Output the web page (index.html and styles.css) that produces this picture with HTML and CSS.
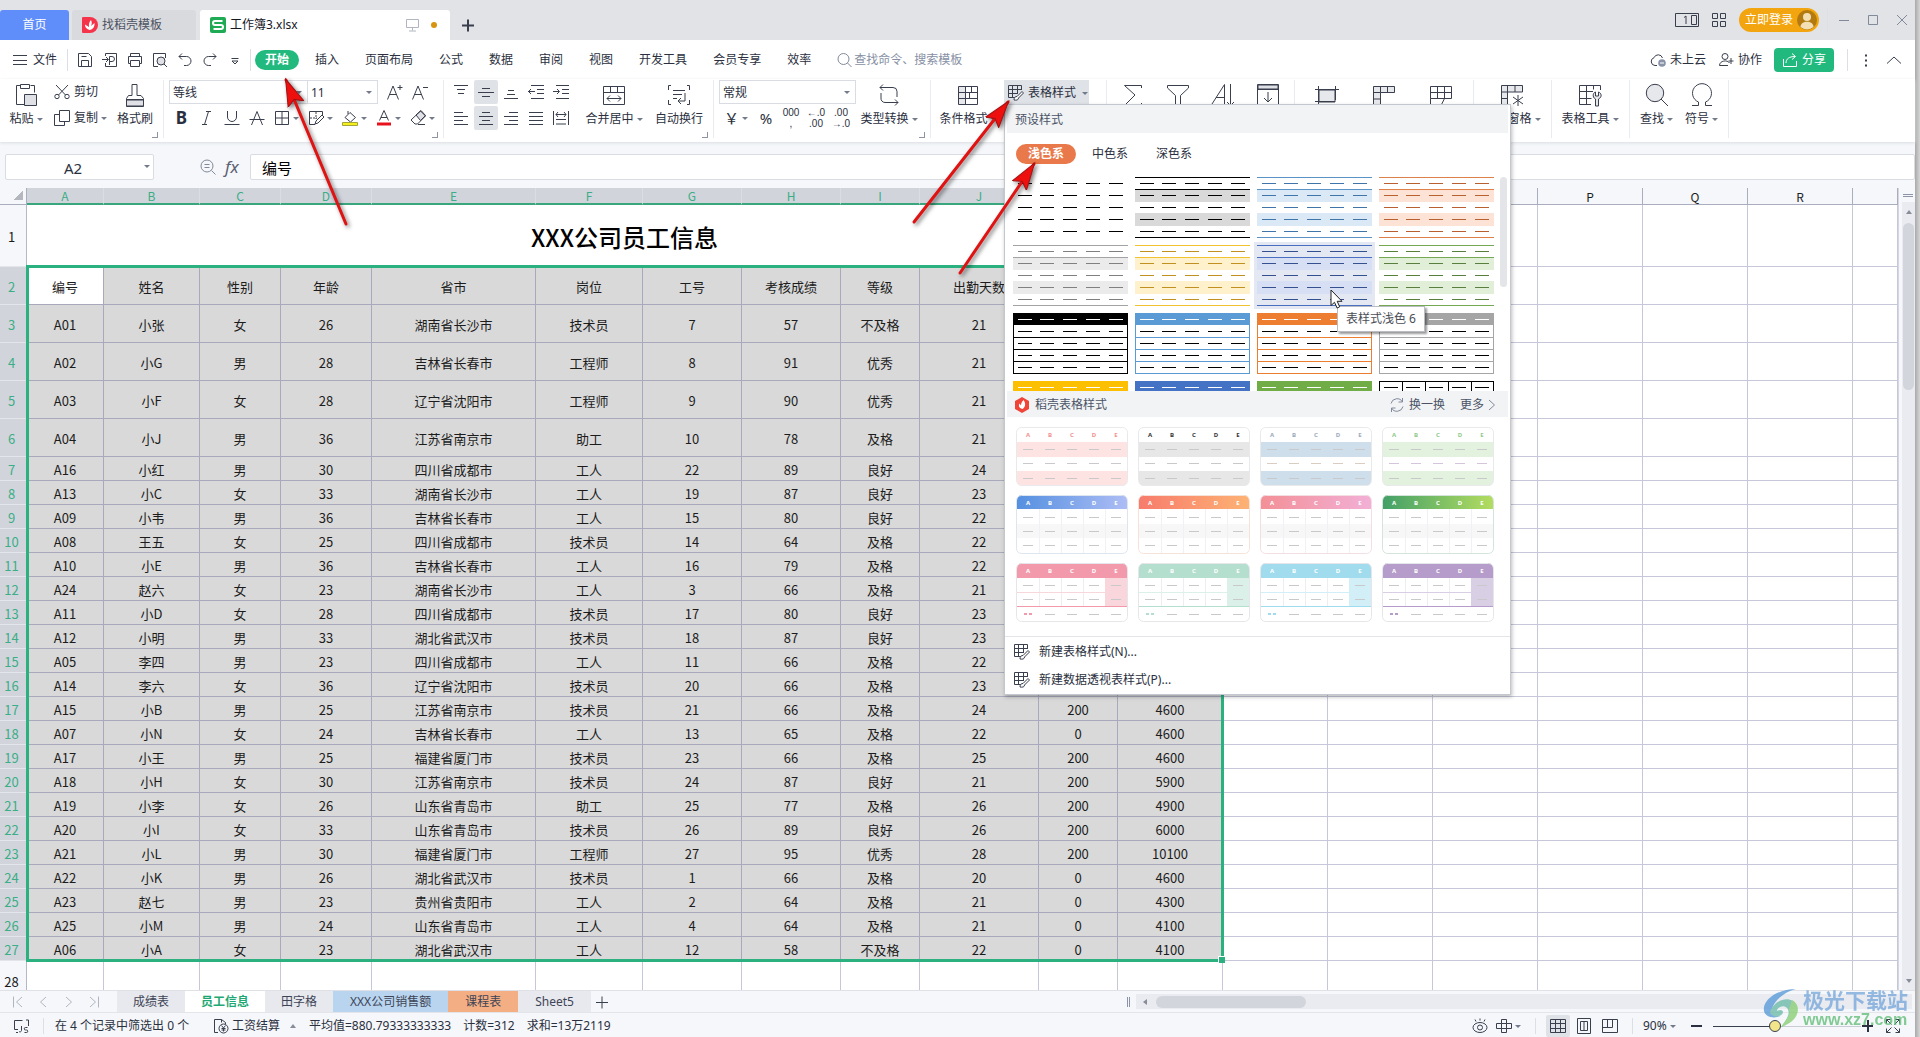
FILE: index.html
```html
<!DOCTYPE html>
<html lang="zh-CN">
<head>
<meta charset="utf-8">
<title>工作簿3.xlsx</title>
<link rel="stylesheet" href="styles.css">
</head>
<body>
<svg class="defs" aria-hidden="true">
  <symbol id="save" viewBox="0 0 16 16"><path d="M1.5 1.5h10l3 3v10h-13zM4.500 14.500v-6h7v6M4.500 4.500h5"/></symbol>
  <symbol id="export" viewBox="0 0 16 16"><path d="M3.500 4V1.500h11v13h-11V11M0 7.500h6M4 5l2.500 2.500L4 10M7.500 13V4.500H10a2.300 2.300 0 0 1 0 5H7.500"/></symbol>
  <symbol id="print" viewBox="0 0 16 16"><path d="M3.500 4.500v-3h9v3M3.500 11.500h-2v-7h13v7h-2M3.500 8.500h9v6h-9z"/></symbol>
  <symbol id="preview" viewBox="0 0 16 16"><path d="M6 14.500H1.500v-13h12V6M12 12l3 3"/><circle cx="9" cy="9" r="4" fill="#dfe1e6"/></symbol>
  <symbol id="undo" viewBox="0 0 16 16"><path d="M5 1.500L2 4.500l3 3M2 4.500h7.500a4.500 4.500 0 0 1 0 9H7"/></symbol>
  <symbol id="redo" viewBox="0 0 16 16"><path d="M11 1.500l3 3-3 3M14 4.500H6.500a4.500 4.500 0 0 0 0 9H9"/></symbol>
  <symbol id="more" viewBox="0 0 16 16"><path d="M4.500 6.500h7M5 9l3 3 3-3z"/></symbol>
  <symbol id="burger" viewBox="0 0 16 16"><path d="M1 3.500h14M1 8.500h14M1 12.500h14"/></symbol>
  <symbol id="search" viewBox="0 0 16 16"><circle cx="6.500" cy="7" r="5.500"/><path d="M10.500 11l4 4"/></symbol>
  <symbol id="paste" viewBox="0 0 24 24"><path d="M6.500 2.500h-4v19h9M16.500 2.500h4v7M6.500 1.500h9v4h-9z"/><path d="M10.500 11.500h12v11h-12z" fill="#dfe1e6"/></symbol>
  <symbol id="cut" viewBox="0 0 16 16"><path d="M2 1l9.500 10M14 1L4.500 11"/><circle cx="3" cy="12.500" r="2.200"/><circle cx="13" cy="12.500" r="2.200"/></symbol>
  <symbol id="copy" viewBox="0 0 16 16"><path d="M5.500.5h10v11h-10zM5.500 4.500h-5v11h10v-4"/></symbol>
  <symbol id="brush" viewBox="0 0 24 24"><path d="M3.500 17h17v6h-17z" fill="#dfe1e6"/><path d="M3.500 23.500v-8l2-3h3.500V1.500h5v11h4l2.500 3v8zM3.500 16.500h17"/></symbol>
  <symbol id="aplus" viewBox="0 0 16 16"><path d="M.5 15.500L6 2l5.500 13.500M2.500 10.500h7M10.500 3.500h5M13 1v5"/></symbol>
  <symbol id="aminus" viewBox="0 0 16 16"><path d="M.5 15.500L6 2l5.500 13.500M2.500 10.500h7M11 3.500h5"/></symbol>
  <symbol id="strike" viewBox="0 0 16 16"><path d="M2.500 15L8 1.500 13.500 15M.5 9.500h15"/></symbol>
  <symbol id="under" viewBox="0 0 16 16"><path d="M3.500 1v6a4.500 4.500 0 0 0 9 0V1M.5 14.500h15"/></symbol>
  <symbol id="ital" viewBox="0 0 16 16"><path d="M7 1.500h5M9.500 1.500l-4 13M3 14.500h5"/></symbol>
  <symbol id="borders" viewBox="0 0 16 16"><path d="M1.500 1.500h13v13h-13zM8 1.500v13M1.500 8h13"/></symbol>
  <symbol id="bdraw" viewBox="0 0 16 16"><path d="M7 14.500H1.500v-13h13V5"/><path stroke-dasharray="2 1" d="M2 8h7M8 2v7"/><path d="M7 14l1-3 6-6 2 2-6 6z"/></symbol>
  <symbol id="fill" viewBox="0 0 16 16"><path d="M3 7.500l5-5 5.500 5-5 4.500zM6 1v3"/><path d="M.5 12.500h15v3H.5z" fill="#f4f01c" stroke="#a6a33a"/></symbol>
  <symbol id="fcolor" viewBox="0 0 16 16"><path d="M3.500 10.500L8 .5l4.500 10M5 7.500h6"/><path d="M1 12.500h14v3H1z" fill="#e8121c" stroke="none"/></symbol>
  <symbol id="eraser" viewBox="0 0 16 16"><path d="M6 5l5-4.500 4.500 5-5 5z" fill="#dfe1e6"/><path d="M10.500 1l5 5-8 8H5L1 10zM8 14.500h7"/></symbol>
  <symbol id="atop" viewBox="0 0 16 16"><path d="M1 1.500h14M4 5.500h8M5 9.500h6"/></symbol>
  <symbol id="amid" viewBox="0 0 16 16"><path d="M4 4.500h8M0 8.500h16M4 12.500h8"/></symbol>
  <symbol id="abot" viewBox="0 0 16 16"><path d="M5 6.500h6M4 10.500h8M1 14.500h14"/></symbol>
  <symbol id="aleft" viewBox="0 0 16 16"><path d="M1 2.500h9M1 6.500h14M1 10.500h9M1 14.500h14"/></symbol>
  <symbol id="acen" viewBox="0 0 16 16"><path d="M4 2.500h8M1 6.500h14M4 10.500h8M1 14.500h14"/></symbol>
  <symbol id="aright" viewBox="0 0 16 16"><path d="M6 2.500h9M1 6.500h14M6 10.500h9M1 14.500h14"/></symbol>
  <symbol id="ajust" viewBox="0 0 16 16"><path d="M1 2.500h14M1 6.500h14M1 10.500h14M1 14.500h14"/></symbol>
  <symbol id="adist" viewBox="0 0 16 16"><path d="M.5 1v14M15.500 1v14M3 4.500h10M5 2L3 4.500 5 7M11 2l2 2.500L11 7M3 9.500h10M3 14h10"/></symbol>
  <symbol id="outd" viewBox="0 0 16 16"><path d="M3 1.500h13M9 5.500h7M9 9.500h7M3 14.500h13M0 7.500h7M3 5L.5 7.500 3 10"/></symbol>
  <symbol id="ind" viewBox="0 0 16 16"><path d="M3 1.500h13M9 5.500h7M9 9.500h7M3 14.500h13M0 7.500h6M4 5l2.500 2.500L4 10"/></symbol>
  <symbol id="merge" viewBox="0 0 24 24"><path d="M1.500 3.500h21v18h-21zM1.500 9.500h21M8.500 3.500v6M15.500 3.500v6M5 15.500h14M8 12.500l-3 3 3 3M16 12.500l3 3-3 3"/></symbol>
  <symbol id="wrap" viewBox="0 0 24 24"><path d="M4 2.500H1.500V7M1.500 17v4.500H4M20 2.500h2.500V7M22.500 17v4.500H20M6 7.500h12M6 11.500h9M6 15.500h4M18 10v8h-6M14 15l-3 3 3 3"/></symbol>
  <symbol id="conv" viewBox="0 0 24 24"><path d="M6 1.500l-3 3 3 3M3 4.500h13a4 4 0 0 1 4 4V14M4 10v5a4 4 0 0 0 4 4.500h13M18 16.500l3 3-3 3"/></symbol>
  <symbol id="cond" viewBox="0 0 24 24"><path d="M2 4h7v17H2z" fill="#e6e8ec" stroke="none"/><path d="M2.500 3.500h19v18h-19zM2.500 9.500h19M2.500 15.500h19M9.500 3.500v18M15.500 3.500v6M13.500 9.500v6"/></symbol>
  <symbol id="tstyle" viewBox="0 0 16 16"><path d="M7 12.500H.5V.5h13V5M.5 4.500h13M.5 8.500H10M4.500.5v12M9.500.5V8"/><path d="M6 15c0-3 1.500-3.500 3-3.500l5-5 1.500 1.500-5 5c0 2-2 2.500-4.500 2z" fill="#fff"/></symbol>
  <symbol id="sum" viewBox="0 0 24 24"><path d="M20.500 5V2.500H3.500L14 12 3.500 22.500h17V20"/></symbol>
  <symbol id="funnel" viewBox="0 0 24 24"><path d="M1.500 2.500h21V5l-8 7.500v10h-5v-10L1.500 5z"/></symbol>
  <symbol id="sort" viewBox="0 0 24 24"><path d="M1 21L13.500 1.500V21M5 14.500h8M19.500 1v21M16 19l3.500 3.500L23 19"/></symbol>
  <symbol id="filld" viewBox="0 0 24 24"><path d="M2 2h20v4H2z" fill="#dfe1e6"/><path d="M1.500 1.500h21v21h-21zM1.500 6.500h21M12 9v10M8 15l4 4 4-4"/></symbol>
  <symbol id="cell" viewBox="0 0 24 24"><path d="M4 7h16v12H4z" fill="#e6e8ec"/><path d="M0 6.500h24M0 18.500h20M3.500 3v19M20.500 3v14"/></symbol>
  <symbol id="rowcol" viewBox="0 0 24 24"><path d="M1.500 3.500h21v6h-14v13h-7zM1.500 9.500h7M8.500 3.500v6M15.500 3.500v6M1.500 16h7" fill="#e6e8ec"/></symbol>
  <symbol id="wsheet" viewBox="0 0 24 24"><path d="M1.500 3.500h21v12h-21zM1.500 9.500h21M8.500 3.500v12M15.500 3.500v12M1.500 15.500v6h11l3-6"/></symbol>
  <symbol id="freeze" viewBox="0 0 24 24"><path d="M1.500 2.500h21V9h-15v12.500h-6zM1.500 9H8M7.500 2.500V9M15 2.500V9M1.500 15.500h6" fill="#e6e8ec"/><path d="M18 12v11M13 14l10 7M23 14l-10 7"/></symbol>
  <symbol id="ttool" viewBox="0 0 24 24"><path d="M13 21.500H1.500v-19h21V7M1.500 8.500H15M1.500 15.500h12M8.500 2.500v19M15.500 2.500v4"/><path d="M17.500 23v-7c-4-2-2-7 0-7v4h3V9c3 1 4 5 0 7v7z" fill="#e6e8ec"/></symbol>
  <symbol id="find" viewBox="0 0 24 24"><circle cx="10" cy="10" r="8.700" fill="#e6e8ec"/><path d="M16 16l7 7"/></symbol>
  <symbol id="omega" viewBox="0 0 24 24"><path d="M2 22.500h6.500V19A9.500 9.500 0 1 1 15.500 19v3.500H22"/></symbol>
  <symbol id="cloud" viewBox="0 0 16 16"><path d="M7 13.500H5a4 4 0 0 1-1-7.800A4.500 4.500 0 0 1 12.500 6"/><circle cx="12" cy="11" r="3.800" fill="#8b93a8" stroke="none"/><path d="M10 11h4" stroke="#fff"/></symbol>
  <symbol id="people" viewBox="0 0 16 16"><circle cx="7" cy="4.500" r="3"/><path d="M10 13.500H1.500c0-5 8-6 10-2.500M13 6v6M10.500 9h5"/></symbol>
  <symbol id="share" viewBox="0 0 16 16"><path d="M1.500 7v7.500h13V9M4 11c0-4 3-6.500 9-6.500M10 1.500l3.500 3-3.500 3"/></symbol>
  <symbol id="dots" viewBox="0 0 16 16"><path d="M8 2.500v2M8 7.500v2M8 12.500v2" stroke-width="2"/></symbol>
  <symbol id="up" viewBox="0 0 16 16"><path d="M1 11.500L8 5l7 6.500"/></symbol>
  <symbol id="monitor" viewBox="0 0 16 16"><path d="M2.500 2.500h12v8h-12zM8.500 10.500v3M5 14h7"/></symbol>
  <symbol id="pages" viewBox="0 0 24 16"><path d="M.5 1.500h23v13H.5zM9 5.500l2-1.500v8M16.500 3.500h5v9h-5z"/></symbol>
  <symbol id="tiles" viewBox="0 0 16 16"><path d="M1.500 1.500h5v5h-5zM9.500 1.500h5v5h-5zM1.500 9.500h5v5h-5zM9.500 9.500h5v5h-5z"/></symbol>
  <symbol id="min" viewBox="0 0 16 16"><path d="M3 8.500h10"/></symbol>
  <symbol id="max" viewBox="0 0 16 16"><path d="M3.500 3.500h9v9h-9z"/></symbol>
  <symbol id="close" viewBox="0 0 16 16"><path d="M3 3l10 10M13 3L3 13"/></symbol>
  <symbol id="zoomout" viewBox="0 0 16 16"><circle cx="7" cy="7" r="6"/><path d="M11.500 11.500l4 4M4.500 5.500h5M4.500 8.500h5"/></symbol>
  <symbol id="flame" viewBox="0 0 16 16"><path d="M8 0l7 4v8l-7 4-7-4V4z" fill="#f04438" stroke="none"/><path d="M9.500 3c2.500 3.500 2 7-1 9-4-1-4-3.500-3-5.500l1.500 2C7 6.500 8 4.500 9.500 3z" fill="#fff" stroke="none"/></symbol>
  <symbol id="refresh" viewBox="0 0 16 16"><path d="M2 6.500A6.200 6.200 0 0 1 13.500 5M14 9.500A6.200 6.200 0 0 1 2.500 11M13.500 1v4h-4M2.500 15v-4h4"/></symbol>
  <symbol id="first" viewBox="0 0 16 16"><path d="M4.500 2.500v11M13 3L7.500 8l5.500 5"/></symbol>
  <symbol id="prev" viewBox="0 0 16 16"><path d="M11 3L5.500 8l5.500 5"/></symbol>
  <symbol id="next" viewBox="0 0 16 16"><path d="M5 3l5.500 5L5 13"/></symbol>
  <symbol id="last" viewBox="0 0 16 16"><path d="M11.500 2.500v11M3 3l5.500 5L3 13"/></symbol>
  <symbol id="plus" viewBox="0 0 16 16"><path d="M8 2.500v12M2 8.500h12"/></symbol>
  <symbol id="js" viewBox="0 0 16 16"><path d="M5 11.500H1.500v-9h8M13 2h2.500v6M3 14.500h2M8.500 8v4.500a1.500 1.500 0 0 1-2.500 1M14.500 9.500h-2a1 1 0 0 0 0 2.500h1a1 1 0 0 1 0 2.500h-2"/></symbol>
  <symbol id="money" viewBox="0 0 16 16"><path d="M5 14.500H1.500v-13h7l4 3V6M8.500 1.500v3"/><circle cx="10.500" cy="10.500" r="4.500"/><path d="M8.500 7.500l2 2.500 2-2.500M10.500 10v3.500M8.500 10.500h4M8.500 12h4"/></symbol>
  <symbol id="eye" viewBox="0 0 16 16"><ellipse cx="8" cy="9.500" rx="7" ry="5"/><circle cx="8" cy="9.500" r="2.500"/><path d="M8 .5v2M3 1.500l1 2M13 1.500l-1 2"/></symbol>
  <symbol id="cross" viewBox="0 0 16 16"><path d="M5.500 1.500h5v4h5v5h-5v4h-5v-4h-5v-5h5zM5.500 5.500h5v5h-5z"/></symbol>
  <symbol id="normal" viewBox="0 0 16 16"><path d="M.5 1.500h15v13H.5zM.5 5.500h15M.5 10.500h15M5.500 1.500v13M10.500 1.500v13"/></symbol>
  <symbol id="page" viewBox="0 0 16 16"><path d="M1.500.5h13v15h-13zM4.500 3.500h7v9h-7zM8 3.500v9"/></symbol>
  <symbol id="split" viewBox="0 0 16 16"><path d="M.5 1.500h15v13H.5zM.5 9.500h10v-8M5.500 1.500v8"/></symbol>
  <symbol id="full" viewBox="0 0 16 16"><path d="M9.500 6.500l5-5M10.500 1.500h4v4M6.500 6.500l-5-5M1.500 5.500v-4h4M9.500 9.500l5 5M14.500 10.500v4h-4M6.500 9.500l-5 5M1.500 10.500v4h4"/></symbol>
</svg>

<header class="titlebar">
  <button class="tab home">首页</button>
  <button class="tab docer"><svg class="logo" viewBox="0 0 16 16"><path d="M1 0h7a8 8 0 0 1 0 16H1a1 1 0 0 1-1-1V1a1 1 0 0 1 1-1z" fill="#f5334a"/><path d="M7.500 13C4 12 3 10 3 7.500L7 10C6.500 7 7.500 4.500 9 3c1 2 1 4 0 6l3.500-3c.5 3.500-1.500 6.500-5 7z" fill="#fff"/></svg>找稻壳模板</button>
  <button class="tab book"><svg class="logo" viewBox="0 0 16 16"><rect width="16" height="16" rx="2" fill="#1fab54"/><path d="M12.500 4H5a1.500 1.500 0 0 0 0 4h6a1.500 1.500 0 0 1 0 4H3.500" fill="none" stroke="#fff" stroke-width="2"/></svg>工作簿3.xlsx<span class="grow"></span><svg class="ic pale"><use href="#monitor"/></svg><i class="dot"></i></button>
  <button class="flat addtab" aria-label="新建标签"><svg class="ic heavy"><use href="#plus"/></svg></button>
  <span class="grow"></span>
  <div class="winctl">
    <svg class="ic wide"><use href="#pages"/></svg>
    <svg class="ic"><use href="#tiles"/></svg>
    <button class="login">立即登录<svg class="avatar" viewBox="0 0 20 20"><circle cx="10" cy="10" r="10" fill="#b27a10"/><circle cx="10" cy="7" r="4" fill="#f4dfb4"/><path d="M3.500 17c0-7 13-7 13 0a10 10 0 0 1-13 0z" fill="#f4dfb4"/></svg></button>
    <i class="vsep"></i>
    <button class="flat" aria-label="最小化"><svg class="ic mid"><use href="#min"/></svg></button>
    <button class="flat" aria-label="最大化"><svg class="ic mid"><use href="#max"/></svg></button>
    <button class="flat" aria-label="关闭"><svg class="ic mid"><use href="#close"/></svg></button>
  </div>
</header>

<nav class="menubar">
  <button class="flat filebtn"><svg class="ic"><use href="#burger"/></svg>文件</button>
  <i class="vsep"></i>
  <div class="quick">
    <button class="flat" aria-label="保存"><svg class="ic"><use href="#save"/></svg></button>
    <button class="flat" aria-label="输出为PDF"><svg class="ic"><use href="#export"/></svg></button>
    <button class="flat" aria-label="打印"><svg class="ic"><use href="#print"/></svg></button>
    <button class="flat" aria-label="打印预览"><svg class="ic"><use href="#preview"/></svg></button>
    <button class="flat" aria-label="撤销"><svg class="ic"><use href="#undo"/></svg></button>
    <button class="flat" aria-label="恢复"><svg class="ic"><use href="#redo"/></svg></button>
    <button class="flat" aria-label="更多"><svg class="ic"><use href="#more"/></svg></button>
  </div>
  <i class="vsep"></i>
  <div class="menus">
    <button class="flat active">开始</button>
    <button class="flat">插入</button>
    <button class="flat">页面布局</button>
    <button class="flat">公式</button>
    <button class="flat">数据</button>
    <button class="flat">审阅</button>
    <button class="flat">视图</button>
    <button class="flat">开发工具</button>
    <button class="flat">会员专享</button>
    <button class="flat">效率</button>
  </div>
  <label class="search"><svg class="ic mid"><use href="#search"/></svg><input type="text" placeholder="查找命令、搜索模板"></label>
  <span class="grow"></span>
  <div class="collab">
    <button class="flat"><svg class="ic"><use href="#cloud"/></svg>未上云</button>
    <button class="flat"><svg class="ic"><use href="#people"/></svg>协作</button>
    <button class="sharebtn"><svg class="ic"><use href="#share"/></svg>分享</button>
    <i class="vsep"></i>
    <button class="flat" aria-label="更多选项"><svg class="ic"><use href="#dots"/></svg></button>
    <button class="flat" aria-label="收起功能区"><svg class="ic"><use href="#up"/></svg></button>
  </div>
</nav>

<section class="ribbon">
  <div class="group g-clip corner">
    <button class="big w40"><svg><use href="#paste"/></svg><span class="dd">粘贴</span></button>
    <div class="rows clip">
      <button class="flat"><svg class="ic"><use href="#cut"/></svg>剪切</button>
      <button class="flat"><svg class="ic"><use href="#copy"/></svg><span class="dd">复制</span></button>
    </div>
    <button class="big w50"><svg><use href="#brush"/></svg><span>格式刷</span></button>
  </div>
  <div class="group g-font corner">
    <div class="rows">
      <div class="row">
        <span class="combo c-font"><select aria-label="字体"><option>等线</option></select></span>
        <span class="combo c-size"><select aria-label="字号"><option>11</option></select></span>
        <button class="t" aria-label="增大字号"><svg class="ic"><use href="#aplus"/></svg></button>
        <button class="t" aria-label="减小字号"><svg class="ic"><use href="#aminus"/></svg></button>
      </div>
      <div class="row">
        <button class="t bold">B</button>
        <button class="t" aria-label="倾斜"><svg class="ic"><use href="#ital"/></svg></button>
        <button class="t" aria-label="下划线"><svg class="ic"><use href="#under"/></svg></button>
        <button class="t" aria-label="删除线"><svg class="ic"><use href="#strike"/></svg></button>
        <button class="t dd" aria-label="边框"><svg class="ic"><use href="#borders"/></svg></button>
        <button class="t dd" aria-label="绘制边框"><svg class="ic"><use href="#bdraw"/></svg></button>
        <button class="t dd" aria-label="填充颜色"><svg class="ic"><use href="#fill"/></svg></button>
        <button class="t dd" aria-label="字体颜色"><svg class="ic"><use href="#fcolor"/></svg></button>
        <button class="t dd" aria-label="清除"><svg class="ic"><use href="#eraser"/></svg></button>
      </div>
    </div>
  </div>
  <div class="group g-align corner">
    <div class="rows">
      <div class="row gap1">
        <button class="t" aria-label="顶端对齐"><svg class="ic"><use href="#atop"/></svg></button>
        <button class="t on" aria-label="垂直居中"><svg class="ic"><use href="#amid"/></svg></button>
        <button class="t" aria-label="底端对齐"><svg class="ic"><use href="#abot"/></svg></button>
        <button class="t" aria-label="减少缩进"><svg class="ic"><use href="#outd"/></svg></button>
        <button class="t" aria-label="增加缩进"><svg class="ic"><use href="#ind"/></svg></button>
      </div>
      <div class="row gap1">
        <button class="t" aria-label="左对齐"><svg class="ic"><use href="#aleft"/></svg></button>
        <button class="t on" aria-label="水平居中"><svg class="ic"><use href="#acen"/></svg></button>
        <button class="t" aria-label="右对齐"><svg class="ic"><use href="#aright"/></svg></button>
        <button class="t" aria-label="两端对齐"><svg class="ic"><use href="#ajust"/></svg></button>
        <button class="t" aria-label="分散对齐"><svg class="ic"><use href="#adist"/></svg></button>
      </div>
    </div>
    <button class="big w66"><svg><use href="#merge"/></svg><span class="dd">合并居中</span></button>
    <button class="big w58"><svg><use href="#wrap"/></svg><span>自动换行</span></button>
  </div>
  <div class="group g-num corner">
    <div class="rows">
      <div class="row"><span class="combo c-fmt"><select aria-label="数字格式"><option>常规</option></select></span></div>
      <div class="row gap1">
        <button class="t dd num">￥</button>
        <button class="t num">%</button>
        <button class="t tiny"><span>000</span><span>,</span></button>
        <button class="t tiny"><span>←.0</span><span>.00</span></button>
        <button class="t tiny"><span>.00</span><span>→.0</span></button>
      </div>
    </div>
    <button class="big w66"><svg><use href="#conv"/></svg><span class="dd">类型转换</span></button>
  </div>
  <div class="group g-style">
    <button class="big w70"><svg><use href="#cond"/></svg><span class="dd">条件格式</span></button>
    <div class="dropwrap">
      <button class="stylebtn"><svg class="ic"><use href="#tstyle"/></svg><span class="dd">表格样式</span></button>
      <div class="panel">
        <div class="phead">预设样式</div>
        <div class="ptabs"><button class="ptab on">浅色系</button><button class="ptab">中色系</button><button class="ptab">深色系</button></div>
        <div class="presets"><div class="pgrid" id="presets"></div><i class="pscroll"></i></div>
        <div class="phead docerhead"><svg class="ic"><use href="#flame"/></svg>稻壳表格样式<span class="grow"></span><button class="flat"><svg class="ic mid"><use href="#refresh"/></svg>换一换</button><a href="#">更多<svg class="ic mid"><use href="#next"/></svg></a></div>
        <div class="cards" id="cards"></div>
        <div class="pfoot">
          <button class="flat"><svg class="ic"><use href="#tstyle"/></svg>新建表格样式(N)...</button>
          <button class="flat"><svg class="ic"><use href="#tstyle"/></svg>新建数据透视表样式(P)...</button>
        </div>
        <div class="tooltip">表样式浅色 6</div>
        <svg class="cursor" viewBox="0 0 14 20"><path d="M1 1v15.500l3.500-3.200 2.600 5.700 2.600-1.200-2.500-5.500H12z" fill="#fff" stroke="#222"/></svg>
      </div>
    </div>
  </div>
  <div class="group g-edit">
    <button class="big w45"><svg><use href="#sum"/></svg><span class="dd">求和</span></button>
    <button class="big w45"><svg><use href="#funnel"/></svg><span class="dd">筛选</span></button>
    <button class="big w45"><svg><use href="#sort"/></svg><span class="dd">排序</span></button>
    <button class="big w45"><svg><use href="#filld"/></svg><span class="dd">填充</span></button>
  </div>
  <div class="group g-cells">
    <button class="big w57"><svg><use href="#cell"/></svg><span class="dd">单元格</span></button>
    <button class="big w57"><svg><use href="#rowcol"/></svg><span class="dd">行和列</span></button>
    <button class="big w57"><svg><use href="#wsheet"/></svg><span class="dd">工作表</span></button>
  </div>
  <div class="group g-one"><button class="big w66"><svg><use href="#freeze"/></svg><span class="dd">冻结窗格</span></button></div>
  <div class="group g-one"><button class="big w66"><svg><use href="#ttool"/></svg><span class="dd">表格工具</span></button></div>
  <div class="group g-find">
    <button class="big w45"><svg><use href="#find"/></svg><span class="dd">查找</span></button>
    <button class="big w45"><svg><use href="#omega"/></svg><span class="dd">符号</span></button>
  </div>
</section>

<section class="formula">
  <span class="combo namebox"><input type="text" value="A2" aria-label="名称框"></span>
  <button class="flat" aria-label="缩小"><svg class="ic mid"><use href="#zoomout"/></svg></button>
  <button class="flat fx">fx</button>
  <input class="finput" type="text" value="编号" aria-label="编辑栏">
</section>

<main class="sheet">
  <div class="canvas">
    <table id="cells"></table>
    <i class="selection"></i>
  </div>
  <div class="vbar"><i class="splitter"></i><div class="track"><i class="arr-up"></i><i class="vthumb"></i><span class="grow"></span><i class="arr-down"></i></div></div>
</main>

<div class="sheettabs">
  <div class="navs">
    <button class="flat" aria-label="第一张"><svg class="ic pale"><use href="#first"/></svg></button>
    <button class="flat" aria-label="上一张"><svg class="ic pale"><use href="#prev"/></svg></button>
    <button class="flat" aria-label="下一张"><svg class="ic pale"><use href="#next"/></svg></button>
    <button class="flat" aria-label="最后一张"><svg class="ic pale"><use href="#last"/></svg></button>
  </div>
  <button class="st">成绩表</button>
  <button class="st cur">员工信息</button>
  <button class="st">田字格</button>
  <button class="st blue">XXX公司销售额</button>
  <button class="st orange">课程表</button>
  <button class="st roomy">Sheet5</button>
  <button class="flat addsheet" aria-label="新建工作表"><svg class="ic"><use href="#plus"/></svg></button>
  <span class="grow"></span>
  <div class="hbar"><i class="grip"></i><div class="htrack"><i class="arr-left"></i><i class="hthumb"></i></div></div>
</div>

<footer class="status">
  <svg class="ic"><use href="#js"/></svg>
  <i class="vsep"></i>
  <span class="s-filter">在 4 个记录中筛选出 0 个</span>
  <button class="flat calc"><svg class="ic"><use href="#money"/></svg>工资结算<i class="arr-up"></i></button>
  <span class="sums"><span>平均值=880.79333333333</span><span>计数=312</span><span>求和=13万2119</span></span>
  <span class="grow"></span>
  <div class="views">
    <button class="t" aria-label="护眼模式"><svg class="ic"><use href="#eye"/></svg></button>
    <button class="t dd" aria-label="阅读模式"><svg class="ic"><use href="#cross"/></svg></button>
    <i class="vsep"></i>
    <button class="t on" aria-label="普通视图"><svg class="ic"><use href="#normal"/></svg></button>
    <button class="t" aria-label="页面布局"><svg class="ic"><use href="#page"/></svg></button>
    <button class="t" aria-label="分页预览"><svg class="ic"><use href="#split"/></svg></button>
    <i class="vsep"></i>
    <button class="flat dd zoom">90%</button>
    <button class="flat step minus" aria-label="缩小"></button>
    <input class="slider" type="range" min="0" max="100" value="41" aria-label="缩放">
    <button class="flat step plus" aria-label="放大"></button>
    <button class="flat fullbtn" aria-label="全屏"><svg class="ic"><use href="#full"/></svg></button>
  </div>
</footer>

<div class="brand">
  <svg viewBox="0 0 40 42"><path d="M34 2C14 2 0 14 2 24c1 6 10 8 16 5-5 0-9-2-8-7C12 14 22 5 34 2z" fill="#4c93d6"/><path d="M8 26c2-10 14-17 23-12 8 6 4 20-12 26 6-8 10-14 6-19-4-4-10 0-10 3 3-2 6-1 6 1 0 4-9 7-13 1z" fill="#63b7a4"/><path d="M30 13c10 5 8 21-11 27 6-8 10-13 8-18z" fill="#7fcc6a"/></svg>
  <div><b>极光下载站</b><em>www.xz7.com</em></div>
</div>

<svg class="arrows" viewBox="0 0 1920 1037">
  <defs><marker id="head" markerUnits="userSpaceOnUse" markerWidth="30" markerHeight="22" refX="26" refY="10" orient="auto"><path d="M27 10L0 1.500 5 10 0 18.500z" fill="#ee0f0f" stroke="#a31212"/></marker></defs>
  <g stroke="#e01212" stroke-width="3" stroke-linecap="round">
    <path d="M346 224L286 80" marker-end="url(#head)"/>
    <path d="M914 222L1008 102" marker-end="url(#head)"/>
    <path d="M960 273L1034 164" marker-end="url(#head)"/>
  </g>
</svg>
<script src="app.js"></script>
</body>
</html>
```
FILE: styles.css
```css
* { box-sizing: border-box; }
html, body { margin: 0; height: 100%; }
body {
  display: flex; flex-direction: column; position: relative; overflow: hidden;
  padding-right: 5px;
  background: linear-gradient(to left, #d6d6d6 0, #a9a9a9 5px, #f5f7fa 5px);
  font: 12px/16px "Noto Sans", "Noto Sans CJK SC", sans-serif; color: #2b3040;
}
button, input, select { font: inherit; color: inherit; }
button { padding: 0; border: 0; background: none; white-space: nowrap; }
input { min-width: 0; padding: 0; border: 0; background: none; outline: 0; }
a { color: inherit; text-decoration: none; }
svg { fill: none; stroke: none; flex: none; }
.defs { position: absolute; width: 0; height: 0; }
.ic { width: 16px; height: 16px; stroke: #3a3f4e; }
.ic.wide { width: 24px; }
.ic.mid { stroke: #82899b; }
.ic.pale { stroke: #b0b5c1; }
.ic.heavy { stroke-width: 2px; }
.grow { flex: 1; }
.flat { display: flex; align-items: center; }
.vsep { width: 1px; height: 22px; background: #dcdfe4; flex: none; }
.dd::after {
  content: ""; display: inline-block; flex: none; vertical-align: middle;
  margin-left: 3px; border: 3px solid transparent; border-top-color: #737a8a; border-bottom: 0;
}

/* title bar */
.titlebar { display: flex; align-items: flex-end; height: 40px; flex: none; background: #e1e3e7; }
.tab { height: 30px; border-radius: 3px 3px 0 0; display: flex; align-items: center; gap: 4px; }
.home { width: 69px; margin-right: 3px; justify-content: center; background: #5f8efb; color: #fff; }
.docer { width: 124px; margin-right: 4px; padding-left: 10px; background: #d9dadd; color: #4c5262; }
.book { width: 250px; padding: 0 13px 0 10px; background: #fff; color: #15181f; }
.logo { width: 16px; height: 16px; }
.dot { width: 6px; height: 6px; border-radius: 3px; background: #d8930f; margin-left: 7px; }
.addtab { height: 30px; padding-left: 10px; }
.winctl { display: flex; align-items: center; align-self: center; gap: 12px; padding-right: 4px; }
.login { display: flex; align-items: center; gap: 4px; height: 24px; padding: 0 2px 0 6px; border-radius: 12px; background: #f3a50f; color: #fff; }
.winctl .vsep { margin-left: -4px; margin-right: -4px; }
.winctl .flat { width: 17px; }
.avatar { width: 20px; height: 20px; }

/* menu bar */
.menubar { display: flex; align-items: center; height: 39px; flex: none; background: #fff; }
.filebtn { gap: 5px; padding: 0 10px 0 12px; }
.quick { display: flex; gap: 9px; padding: 0 7px 0 9px; }
.menus { display: flex; gap: 26px; padding-left: 4px; }
.menus .active { width: 44px; height: 20px; margin-right: -10px; justify-content: center; border-radius: 10px; background: #22b97f; color: #fff; font-weight: 700; }
.search { display: flex; align-items: center; gap: 1px; padding-left: 26px; }
.search input { width: 130px; }
.search input::placeholder { color: #8790a4; opacity: 1; }
.collab { display: flex; align-items: center; gap: 12px; padding-right: 13px; }
.collab .flat { gap: 4px; }
.sharebtn { display: flex; align-items: center; gap: 4px; height: 24px; padding: 0 8px; border-radius: 4px; background: #22b97f; color: #fff; }
.sharebtn .ic { stroke: #fff; }
.collab .vsep { margin: 0 -2px 0 1px; }

/* ribbon */
.ribbon { display: flex; height: 63px; flex: none; background: #fff; padding-top: 1px; box-shadow: 0 1px 3px #d9dce2; position: relative; z-index: 2; }
.group { display: flex; align-items: flex-start; flex: none; height: 58px; border-right: 1px solid #e9ebee; position: relative; }
.corner::after { content: ""; position: absolute; right: 5px; bottom: 0; width: 5px; height: 5px; border: solid #8e94a2; border-width: 0 1px 1px 0; }
.g-clip { width: 164px; padding-left: 6px; }
.g-font { width: 280px; padding-left: 5px; }
.g-align { width: 270px; padding-left: 5px; }
.g-num { width: 217px; padding-left: 5px; }
.g-style { width: 176px; padding-left: 2px; }
.g-edit { width: 188px; padding-left: 3px; }
.g-cells { width: 179px; padding-left: 3px; }
.g-one { width: 78px; padding-left: 5px; }
.g-find { width: 99px; padding-left: 4px; }
.big { display: flex; flex-direction: column; align-items: center; gap: 4px; padding-top: 3px; flex: none; }
.big svg { width: 24px; height: 24px; stroke: #3a3f4e; }
.w40 { width: 40px; } .w45 { width: 45px; } .w50 { width: 50px; } .w57 { width: 57px; }
.w58 { width: 58px; } .w66 { width: 66px; } .w70 { width: 70px; }
.rows { display: flex; flex-direction: column; gap: 2px; flex: none; }
.rows.clip { width: 56px; margin-left: 8px; }
.clip .flat { height: 24px; gap: 4px; }
.row { display: flex; height: 24px; align-items: center; }
.gap1 { gap: 1px; }
.t { display: flex; align-items: center; justify-content: center; flex: none; width: 24px; height: 24px; border-radius: 2px; }
.t.on { background: #dfe2e7; }
.t.dd { width: 34px; }
.g-font .t:not(.dd) { width: 25px; }
.g-align { gap: 3px; }
.g-align .rows { margin-right: 5px; }
.bold { font-size: 17px; font-weight: 700; }
.num { font-size: 15px; }
.tiny { flex-direction: column; font: 10px/11px "Liberation Sans", sans-serif; }
.combo { position: relative; display: flex; height: 24px; border: 1px solid #d9dce2; background: #fff; }
.combo::after { content: ""; position: absolute; right: 5px; top: 10px; border: 3px solid transparent; border-top-color: #737a8a; border-bottom: 0; }
.combo select, .combo input { width: 100%; border: 0; padding: 1px 3px 0; appearance: none; background: none; outline: 0; }
.c-font { width: 139px; }
.c-size { width: 71px; margin: 0 4px 0 -1px; }
.c-fmt { width: 137px; }
.dropwrap { position: relative; margin-left: 1px; }
.stylebtn { display: flex; align-items: center; gap: 4px; width: 85px; height: 24px; padding: 1px 0 0 4px; background: #dfe2e7; }
.stylebtn .dd::after { margin-left: 6px; }

/* table style panel */
.panel { position: absolute; left: 0; top: 24px; width: 507px; border: 1px solid #c3c7cf; background: #fff; box-shadow: 1px 2px 4px #0004; z-index: 5; }
.phead { height: 28px; padding: 0 8px; line-height: 30px; margin: 0 2px; background: #f1f3f5; color: #4c5366; }
.ptabs { display: flex; gap: 4px; padding: 11px 11px 13px; }
.ptab { width: 60px; height: 20px; border-radius: 10px; }
.ptab.on { background: #e9794a; color: #fff; font-weight: 700; }
.presets { position: relative; height: 214px; padding: 0 8px; overflow: hidden; }
.pgrid, .cards { display: grid; grid-template-columns: repeat(4, 115px); gap: 7px; }
.pgrid svg { width: 115px; height: 61px; shape-rendering: crispEdges; }
.pgrid .hover { background: #e4e8f3; box-shadow: 0 0 0 3px #e4e8f3; }
.pscroll { position: absolute; right: 3px; top: 0; width: 7px; height: 110px; border-radius: 4px; background: #e3e5e8; }
.docerhead { display: flex; align-items: center; height: 26px; padding: 1px 8px 0 7px; gap: 5px; }
.docerhead .flat { gap: 4px; margin-right: 10px; }
.docerhead a { display: flex; align-items: center; }
.cards { grid-template-columns: repeat(4, 112px); gap: 9px 10px; padding: 10px 11px 14px; }
.cards svg { width: 112px; height: 59px; }
.cards text { font-size: 6px; font-weight: 700; text-anchor: middle; }
.pfoot { border-top: 1px solid #e3e5e9; padding-top: 1px; }
.pfoot .flat { height: 28px; width: 100%; padding-left: 9px; gap: 9px; }
.tooltip { position: absolute; left: 332px; top: 201px; padding: 4px 8px; border: 1px solid #b9bcc3; background: #fff; box-shadow: 2px 2px 2px #0006; color: #4a4d55; }
.cursor { position: absolute; left: 325px; top: 184px; width: 14px; height: 20px; }

/* formula bar */
.formula { display: flex; align-items: flex-start; height: 46px; flex: none; padding: 12px 0 0 5px; background: #f5f7fa; }
.namebox { width: 149px; height: 26px; border-radius: 2px; margin-right: 46px; }
.namebox input { text-align: center; font-size: 15px; padding-right: 16px; }
.namebox::after { right: 3px; }
.formula .flat { height: 26px; width: 25px; }
.fx { font: italic 17px/26px "Noto Sans", sans-serif; color: #5a6070; }
.finput { flex: 1; height: 26px; padding: 0 11px; border: 1px solid #d9dce2; border-radius: 2px; background: #fff; font-size: 15px; color: #000; }

/* grid */
.sheet { flex: 1; min-height: 0; display: flex; }
.canvas { position: relative; flex: 1; overflow: hidden; background: #fff; border-right: 1px solid #d5d7e0; }
table { width: 100%; table-layout: fixed; border-collapse: separate; border-spacing: 0; font: 13px/16px "Noto Sans CJK SC", sans-serif; color: #1c1c1c; }
th, td { padding: 2px 0 0; text-align: center; border: solid #c6c8da; border-width: 0 1px 1px 0; font-weight: 400; white-space: nowrap; }
thead tr { height: 17px; }
thead th { padding: 1px 0 0; background: #f5f7fa; border-color: #a9adbd; font-size: 12px; line-height: 14px; }
thead th.sel { background: #d2d4db; border-right-color: #dbdde2; border-bottom: 2px solid #3aa67e; color: #3aae86; }
thead th:first-child { background: linear-gradient(135deg, transparent 50%, #b4b7bd 50%) 14px 3px / 9px 9px no-repeat #f5f7fa; }
.r62 { height: 62px; } .r38 { height: 38px; } .r24 { height: 24px; } .r40 { height: 40px; }
tbody th { background: #f5f7fa; border-right-color: #b4b7c4; border-bottom-color: #e3e5ea; padding-right: 3px; }
tbody th.sel { background: #d2d4db; color: #3aae86; }
td.sel { background: #d9d9d9; border-color: #a8a9bc; }
td.anchor { background: #fff; }
td.title { font-size: 24px; font-weight: 500; color: #000; }
.selection { position: absolute; left: 26px; top: 77px; width: 1198px; height: 697px; border: 3px solid #2bb07f; }
.selection::after { content: ""; position: absolute; right: -4px; bottom: -4px; width: 6px; height: 6px; background: #2bb07f; border: solid #fff; border-width: 1px 0 0 1px; }
.vbar { width: 16px; display: flex; flex-direction: column; padding-left: 3px; background: #f5f7fa; }
.splitter { height: 3px; margin: 6px 2px 5px 1px; border: solid #8e94a8; border-width: 1px 0; }
.track { flex: 1; display: flex; flex-direction: column; align-items: center; background: #e9ebf0; padding: 8px 0 7px; }
.arr-up, .arr-down, .arr-left { border: 3px solid transparent; }
.arr-up { border-bottom: 4px solid #878c98; border-top: 0; }
.arr-down { border-top: 4px solid #878c98; border-bottom: 0; }
.arr-left { border-right: 4px solid #878c98; border-left: 0; }
.vthumb { width: 11px; height: 167px; margin-top: 9px; border-radius: 6px; background: #d2d5db; }

/* sheet tabs */
.sheettabs { display: flex; height: 23px; flex: none; background: #f5f7fa; border-top: 1px solid #dfe1e6; border-bottom: 1px solid #e3e5ea; }
.navs { display: flex; gap: 10px; padding-left: 9px; width: 117px; }
.st { height: 21px; padding: 0 16px; background: #e7e9ee; color: #3e4456; }
.st.cur { background: #fff; color: #1fa874; font-weight: 700; }
.st.blue { background: #b8d4ef; padding: 0 17px; }
.st.orange { background: #f4ae83; padding: 0 17px; }
.st.roomy { padding: 0 17px; }
.addsheet { padding-left: 3px; }
.hbar { display: flex; align-items: center; width: 41%; margin-right: 3px; }
.grip { width: 3px; height: 10px; border: solid #8e94a8; border-width: 0 1px; margin-right: 6px; }
.htrack { flex: 1; display: flex; align-items: center; height: 15px; padding-left: 7px; background: #e9ebf0; }
.hthumb { width: 150px; height: 12px; margin-left: 9px; border-radius: 6px; background: #d2d5db; }

/* status bar */
.status { display: flex; align-items: center; height: 24px; flex: none; padding: 2px 0 0 13px; background: #f5f7fa; }
.status .vsep { height: 16px; margin-left: 14px; }
.s-filter { margin-left: 11px; width: 158px; white-space: nowrap; }
.calc { gap: 3px; width: 96px; }
.calc .arr-up { margin-left: 7px; }
.sums { display: flex; gap: 12px; white-space: nowrap; }
.views { display: flex; align-items: center; padding-right: 14px; }
.views .t { margin-right: 2px; height: 22px; }
.views .t.dd { margin-left: -3px; }
.status .views .vsep { margin: 0 10px 0 8px; }
.zoom { width: 48px; }
.step { position: relative; width: 11px; height: 12px; }
.step::before, .plus::after { content: ""; position: absolute; left: 0; top: 5px; width: 11px; height: 2px; background: #2b3040; }
.plus::after { left: 5px; top: 0; width: 2px; height: 12px; }
.slider { appearance: none; width: 148px; height: 14px; margin: 0 1px 0 11px; background: linear-gradient(90deg, #3a3f4e 42%, #c9ccd4 42%) center / 100% 1px no-repeat; }
.slider::-webkit-slider-thumb { appearance: none; width: 12px; height: 12px; border: 1px solid #3a3f4e; border-radius: 6px; background: #f2e58a; }
.fullbtn { margin-left: 12px; }

/* overlays */
.brand { position: absolute; right: 12px; bottom: 8px; display: flex; align-items: center; gap: 1px; opacity: .72; z-index: 6; }
.brand svg { width: 40px; height: 42px; }
.brand b { display: block; font: 700 21px/24px "Noto Sans CJK SC", sans-serif; color: #6fa3da; }
.brand em { display: block; font: 16px/18px "Liberation Sans", sans-serif; font-weight: 700; color: #55b96e; }
.arrows { position: absolute; left: 0; top: 0; width: 1920px; height: 1037px; pointer-events: none; z-index: 7; filter: drop-shadow(2px 2px 2px #0008); }
```
FILE: app.js
```js
const cols = [77, 96, 81, 91, 164, 107, 99, 99, 79, 119, 79, 105, 105, 105, 105, 105, 105, 105];
const heads = ['编号', '姓名', '性别', '年龄', '省市', '岗位', '工号', '考核成绩', '等级', '出勤天数', '', ''];
const people = `A01,小张,女,26,湖南省长沙市,技术员,7,57,不及格,21,,
A02,小G,男,28,吉林省长春市,工程师,8,91,优秀,21,,
A03,小F,女,28,辽宁省沈阳市,工程师,9,90,优秀,21,,
A04,小J,男,36,江苏省南京市,助工,10,78,及格,21,,
A16,小红,男,30,四川省成都市,工人,22,89,良好,24,,
A13,小C,女,33,湖南省长沙市,工人,19,87,良好,23,,
A09,小韦,男,36,吉林省长春市,工人,15,80,良好,22,,
A08,王五,女,25,四川省成都市,技术员,14,64,及格,22,,
A10,小E,男,36,吉林省长春市,工人,16,79,及格,22,,
A24,赵六,女,23,湖南省长沙市,工人,3,66,及格,21,,
A11,小D,女,28,四川省成都市,技术员,17,80,良好,23,,
A12,小明,男,33,湖北省武汉市,技术员,18,87,良好,23,,
A05,李四,男,23,四川省成都市,工人,11,66,及格,22,,
A14,李六,女,36,辽宁省沈阳市,技术员,20,66,及格,23,,
A15,小B,男,25,江苏省南京市,技术员,21,66,及格,24,200,4600
A07,小N,女,24,吉林省长春市,工人,13,65,及格,22,0,4600
A17,小王,男,25,福建省厦门市,技术员,23,66,及格,25,200,4600
A18,小H,女,30,江苏省南京市,技术员,24,87,良好,21,200,5900
A19,小李,女,26,山东省青岛市,助工,25,77,及格,26,200,4900
A20,小I,女,33,山东省青岛市,技术员,26,89,良好,26,200,6000
A21,小L,男,30,福建省厦门市,工程师,27,95,优秀,28,200,10100
A22,小K,男,26,湖北省武汉市,技术员,1,66,及格,20,0,4600
A23,赵七,男,23,贵州省贵阳市,工人,2,64,及格,21,0,4300
A25,小M,男,24,山东省青岛市,工人,4,64,及格,21,0,4100
A06,小A,女,23,湖北省武汉市,工人,12,58,不及格,22,0,4100`.split('\n').map(r => r.split(','));

const blanks = n => '<td></td>'.repeat(n);
let html = '<colgroup><col style="width:27px">' + cols.map(w => `<col style="width:${w}px">`).join('') + '<col></colgroup><thead><tr><th></th>';
for (let i = 0; i < 19; i++) html += `<th class="${i < 12 ? 'sel' : ''}">${i < 18 ? String.fromCharCode(65 + i) : ''}</th>`;
html += `</tr></thead><tbody><tr class="r62"><th>1</th><td class="title" colspan="12">XXX公司员工信息</td>${blanks(7)}</tr>`;
[heads, ...people].forEach((row, i) => {
  html += `<tr class="${i < 5 ? 'r38' : 'r24'}"><th class="sel">${i + 2}</th>` +
    row.map((v, j) => `<td class="sel${i + j === 0 ? ' anchor' : ''}">${v}</td>`).join('') + blanks(7) + '</tr>';
});
html += `<tr class="r40"><th>28</th>${blanks(19)}</tr></tbody>`;
document.getElementById('cells').innerHTML = html;

// Preset thumbnails: 115 x 61, five 12px bands with five dashes each
const rect = (x, y, w, h, f) => `<rect x="${x}" y="${y}" width="${w}" height="${h}" fill="${f}"/>`;
const dashes = (y, f) => [5, 27, 50, 73, 96].map(x => rect(x, y, 14, 1, f)).join('');
function lined(line, band, dash, hover) {
  let s = '';
  if (band) s += rect(0, 13, 115, 12, band) + rect(0, 36, 115, 13, band);
  if (line) s += rect(0, 0, 115, 1, line) + rect(0, 12, 115, 1, line) + rect(0, 60, 115, 1, line);
  for (let i = 0; i < 5; i++) s += dashes(6 + i * 12, dash);
  return `<svg viewBox="0 0 115 61" class="${hover ? 'hover' : ''}">${s}</svg>`;
}
function headed(c) {
  let s = rect(0, 0, 115, 61, c) + rect(1, 12, 113, 48, '#fff') + dashes(6, '#fff');
  for (let i = 1; i < 5; i++) s += (i > 1 ? rect(0, i * 12, 115, 1, c) : '') + dashes(6 + i * 12, '#000');
  return `<svg viewBox="0 0 115 61">${s}</svg>`;
}
function ruled(c) {
  let s = rect(0, 0, 115, 61, c) + rect(1, 1, 113, 59, '#fff');
  for (let i = 1; i < 5; i++) s += rect(0, i * 12, 115, 1, c) + rect(i * 23, 0, 1, 61, c);
  for (let i = 0; i < 5; i++) s += dashes(6 + i * 12, '#000');
  return `<svg viewBox="0 0 115 61">${s}</svg>`;
}
document.getElementById('presets').innerHTML = [
  lined('', '', '#000'), lined('#000', '#d9d9d9', '#000'), lined('#5b93c6', '#dbe9f7', '#3f75a8'), lined('#dd8049', '#fce3d6', '#b8602f'),
  lined('#a3a3a3', '#ebebeb', '#808080'), lined('#f2c230', '#fff1cc', '#c09020'), lined('#4a6fc0', '#d6dff4', '#34508f', true), lined('#74a852', '#e1efd9', '#587f3e'),
  headed('#000'), headed('#5b9bd5'), headed('#ed7d31'), headed('#a5a5a5'),
  headed('#fdc000'), headed('#4472c4'), headed('#70ad47'), ruled('#000')
].join('');

// Designer cards: 112 x 59, a header with letters over three rows
const xs = [12, 34, 56, 78, 100];
const letters = f => xs.map((x, i) => `<text x="${x}" y="10" fill="${f}">${'ABCDE'[i]}</text>`).join('');
const marks = (y, f, n = 0) => xs.slice(n).map(x => rect(x - 5, y, 10, 1, f)).join('');
let uid = 0;
function card(inner, edge) {
  const id = 'card' + uid++;
  return `<svg viewBox="0 0 112 59"><clipPath id="${id}"><rect x="1" width="110" height="59" rx="5"/></clipPath><g clip-path="url(#${id})">${inner}</g><rect x=".5" y=".5" width="111" height="58" rx="5" stroke="${edge}"/></svg>`;
}
const banded = (t, b, m) => card(rect(1, 15, 110, 15, b) + rect(1, 44, 110, 15, b) + letters(t) + marks(22, '#c9c9cc') + marks(36, m) + marks(51, '#c9c9cc'), '#e9e9eb');
function gradient(a, b, e) {
  const id = 'grad' + uid;
  return card(`<linearGradient id="${id}"><stop stop-color="${a}"/><stop offset="1" stop-color="${b}"/></linearGradient>` +
    rect(1, 0, 110, 14, `url(#${id})`) + rect(1, 29, 110, 14, '#f7f7f7') + [23, 45, 67, 89].map(x => rect(x, 14, 1, 45, '#f1f1f3')).join('') +
    letters('#fff') + marks(22, '#c9c9cc') + marks(36, '#c9c9cc') + marks(50, '#c9c9cc'), e);
}
const total = (c, l) => card(rect(1, 0, 110, 15, c) + rect(89, 15, 22, 29, l) + [23, 45, 67].map(x => rect(x, 15, 1, 29, '#eeeef2')).join('') +
  rect(1, 29, 88, 1, l) + rect(1, 43, 110, 1, c) + letters('#fff') + marks(22, '#c9c9cc') + marks(36, '#c9c9cc') + marks(51, '#c9c9cc', 1) +
  rect(8, 50, 3, 2, c) + rect(13, 50, 3, 2, c), '#e6e6ea');
document.getElementById('cards').innerHTML = [
  banded('#f0928f', '#fde4e2', '#c9c9cc'), banded('#333', '#e7e7e8', '#c9c9cc'), banded('#9aa9bd', '#cfdeeb', '#d8cdc0'), banded('#8fc98a', '#e2f2df', '#d5c5dc'),
  gradient('#5590e0', '#adbdf5', '#dde5ee'), gradient('#f77c6c', '#fdb274', '#f5e3da'), gradient('#f39097', '#f2b0d6', '#f2dfe4'), gradient('#43a068', '#b3dc60', '#d4e4da'),
  total('#f29aab', '#f9d6dc'), total('#b4dfce', '#dbf0e8'), total('#a0dcee', '#d2eff7'), total('#b59cca', '#d9cfe5')
].join('');
```
